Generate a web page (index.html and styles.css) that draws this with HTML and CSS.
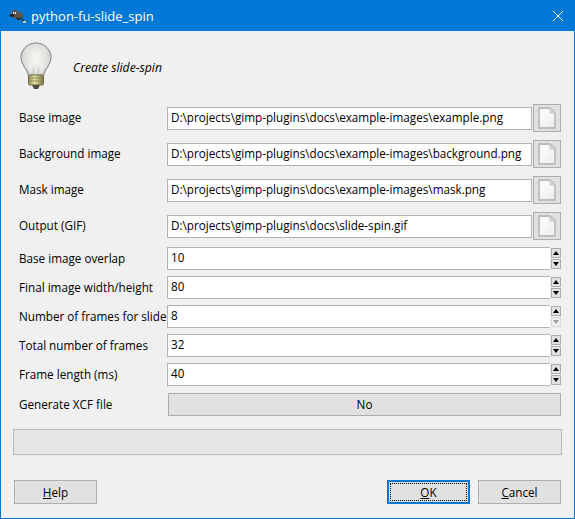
FILE: index.html
```html
<!DOCTYPE html>
<html lang="en">

<head>
    <meta charset="UTF-8">
    <title>python-fu-slide_spin</title>
    <link rel="stylesheet" href="styles.css">
</head>

<body>
    <svg class="defs" width="0" height="0">
        <defs>
            <linearGradient id="hoja" x1="0" y1="0" x2="1" y2="1">
                <stop offset="0" stop-color="#ffffff" />
                <stop offset="1" stop-color="#ececec" />
            </linearGradient>
            <symbol id="doc" viewBox="0 0 18 22">
                <path d="M1 1h11l5 5v15h-16z" fill="url(#hoja)" stroke="#bdbdbd" stroke-width="1.800" stroke-linejoin="round" />
                <path d="M12 1v5h5z" fill="#d6d6d6" stroke="#c8c8c8" stroke-width="1" />
            </symbol>
        </defs>
    </svg>
    <div class="ventana">
        <div class="titulo">
            <svg class="wilber" width="17" height="14" viewBox="0 0 17 14">
                <path d="M0 6l2-1 1-4 2 1 1-2 2 2 4 1 2 3 1 3-3-1-3 2-4-1-3-2z" fill="#5c574e" />
                <path d="M0 6l4-1 2 2-4 1z" fill="#1e1c18" />
                <path d="M4 3h3v2h-3z" fill="#e8e6df" />
                <path d="M5 3.500h1v1h-1z" fill="#111111" />
                <path d="M7 8l4 1 2-1-1 2-4 1z" fill="#2d2a25" />
                <path d="M13 9l2 2 0 2-1 0-2-3z" fill="#3a352c" />
                <path d="M14 12h3v2h-3z" fill="#cfc9a8" />
            </svg>
            <span class="titulo-texto">python-fu-slide_spin</span>
            <svg class="cerrar" width="10" height="10" viewBox="0 0 10 10">
                <path d="M0 0l10 10M10 0l-10 10" stroke="#ffffff" stroke-width="1" fill="none" />
            </svg>
        </div>

        <div class="contenido">
            <div class="cabecera">
                <svg class="foco" width="32" height="50" viewBox="0 0 32 50">
                    <defs>
                        <radialGradient id="vidrio" cx="0.5" cy="0.42" r="0.6">
                            <stop offset="0" stop-color="#f6f7f4" />
                            <stop offset="0.6" stop-color="#e2e4e0" />
                            <stop offset="1" stop-color="#b9bcba" />
                        </radialGradient>
                        <linearGradient id="rosca" x1="0" y1="0" x2="1" y2="0">
                            <stop offset="0" stop-color="#8c8a50" />
                            <stop offset="0.4" stop-color="#e6e3a8" />
                            <stop offset="1" stop-color="#77744a" />
                        </linearGradient>
                    </defs>
                    <path d="M16 1C7.500 1 1 7.500 1 15.500c0 7 5.500 10.500 7 17 .5 2 1 3.500 1.500 4.500h13c.5-1 1-2.500 1.500-4.500 1.500-6.500 7-10 7-17C31 7.500 24.500 1 16 1z" fill="url(#vidrio)" stroke="#7f8287" stroke-width="1" />
                    <path d="M11 31l-1.500-7 3-3h7l3 3-1.500 7" fill="none" stroke="#f8f8f4" stroke-width="1" />
                    <path d="M14 33l-1-7M18 33l1-7" stroke="#c9c9b8" stroke-width="1" fill="none" />
                    <rect x="8.500" y="33" width="15" height="10" rx="1.500" fill="url(#rosca)" stroke="#6d6b45" stroke-width="1" />
                    <path d="M9 36h14M9 39h14" stroke="#8e8b58" stroke-width="1" />
                    <path d="M12 43h8l-2 4h-4z" fill="#4a4a3c" />
                </svg>
                <em class="descripcion">Create slide-spin</em>
            </div>

            <div class="campos">
                <div class="fila fila-archivo">
                    <label>Base image</label>
                    <div class="entrada">D:\projects\gimp-plugins\docs\example-images\example.png</div>
                    <button class="btn-archivo"><svg width="18" height="22"><use href="#doc" /></svg></button>
                </div>
                <div class="fila fila-archivo">
                    <label>Background image</label>
                    <div class="entrada">D:\projects\gimp-plugins\docs\example-images\background.png</div>
                    <button class="btn-archivo"><svg width="18" height="22"><use href="#doc" /></svg></button>
                </div>
                <div class="fila fila-archivo">
                    <label>Mask image</label>
                    <div class="entrada">D:\projects\gimp-plugins\docs\example-images\mask.png</div>
                    <button class="btn-archivo"><svg width="18" height="22"><use href="#doc" /></svg></button>
                </div>
                <div class="fila fila-archivo">
                    <label>Output (GIF)</label>
                    <div class="entrada">D:\projects\gimp-plugins\docs\slide-spin.gif</div>
                    <button class="btn-archivo"><svg width="18" height="22"><use href="#doc" /></svg></button>
                </div>

                <div class="fila">
                    <label>Base image overlap</label>
                    <div class="entrada entrada-spin">10</div>
                    <div class="spin"><span class="up"></span><span class="down"></span></div>
                </div>
                <div class="fila">
                    <label>Final image width/height</label>
                    <div class="entrada entrada-spin">80</div>
                    <div class="spin"><span class="up"></span><span class="down"></span></div>
                </div>
                <div class="fila">
                    <label>Number of frames for slide</label>
                    <div class="entrada entrada-spin">8</div>
                    <div class="spin"><span class="up"></span><span class="down apagado"></span></div>
                </div>
                <div class="fila">
                    <label>Total number of frames</label>
                    <div class="entrada entrada-spin">32</div>
                    <div class="spin"><span class="up"></span><span class="down"></span></div>
                </div>
                <div class="fila">
                    <label>Frame length (ms)</label>
                    <div class="entrada entrada-spin">40</div>
                    <div class="spin"><span class="up"></span><span class="down"></span></div>
                </div>

                <div class="fila fila-toggle">
                    <label>Generate XCF file</label>
                    <button class="boton toggle">No</button>
                </div>
            </div>

            <div class="progreso"></div>

            <div class="acciones">
                <button class="boton accion"><u>H</u>elp</button>
                <div class="acciones-der">
                    <button class="boton accion foco-ok"><span class="punteado"><u>O</u>K</span></button>
                    <button class="boton accion"><u>C</u>ancel</button>
                </div>
            </div>
        </div>
    </div>
</body>

</html>
```

FILE: styles.css
```css
* {
    box-sizing: border-box;
}

html,
body {
    margin: 0;
    height: 519px;
    overflow: hidden;
}

body {
    font-family: "Open Sans", "Noto Sans", sans-serif;
    font-size: 11.700px;
    color: #000000;
    background-color: #f0f0f0;
}

.defs {
    display: block;
    height: 0;
}

.ventana {
    width: 575px;
    height: 519px;
    display: flex;
    flex-direction: column;
    border: 1px solid #0078d7;
    border-top: none;
    background-color: #f0f0f0;
}

.titulo {
    height: 31px;
    flex: none;
    display: flex;
    align-items: center;
    background-color: #0078d7;
    color: #ffffff;
    padding: 0 11px 0 8px;
}

.wilber {
    margin-right: 5px;
}

.titulo-texto {
    flex: 1;
    font-size: 13px;
}

.contenido {
    flex: 1;
    display: flex;
    flex-direction: column;
    padding: 0 12px 0 12px;
}

.cabecera {
    height: 72px;
    display: flex;
    align-items: center;
    padding: 0 0 0 7px;
}

.descripcion {
    margin-left: 21px;
    font-size: 12.200px;
}

.campos {
    display: flex;
    flex-direction: column;
    gap: 6px;
    padding: 0 1px 0 6px;
}

.fila {
    height: 23px;
    display: flex;
    align-items: center;
}

.fila-archivo {
    height: 30px;
}

.fila-toggle {
    margin-top: 1px;
}

.fila label {
    width: 148px;
    flex: none;
    padding-bottom: 2px;
    white-space: nowrap;
}

.entrada {
    height: 23px;
    width: 365px;
    line-height: 19px;
    padding: 0 3px;
    background-color: #ffffff;
    border: 1px solid #b4b4b4;
    white-space: nowrap;
    overflow: hidden;
}

.entrada-spin {
    width: 383px;
    border-right: none;
}

.btn-archivo {
    width: 28px;
    height: 28px;
    margin-left: 1px;
    padding: 0;
    display: flex;
    align-items: center;
    justify-content: center;
    background-color: #e1e1e1;
    border: 1px solid #adadad;
}

.spin {
    width: 10px;
    height: 21px;
    margin-left: 1px;
    display: flex;
    flex-direction: column;
    gap: 1px;
}

.spin span {
    flex: 1;
    background-color: #e1e1e1;
    border: 1px solid #adadad;
    display: flex;
    align-items: center;
    justify-content: center;
}

.spin span::after {
    content: "";
    border-left: 3px solid transparent;
    border-right: 3px solid transparent;
}

.spin .up::after {
    border-bottom: 4px solid #000000;
}

.spin .down::after {
    border-top: 4px solid #000000;
}

.spin .apagado {
    background-color: #efefef;
    border-color: #d9d9d9;
}

.spin .apagado::after {
    border-top-color: #a0a0a0;
}

.boton {
    font-family: inherit;
    font-size: 11.700px;
    color: #000000;
    background-color: #e1e1e1;
    border: 1px solid #adadad;
    padding: 0;
}

.toggle {
    width: 393px;
    height: 23px;
    margin-left: 1px;
    padding-bottom: 2px;
}

.progreso {
    height: 26px;
    margin: 13px 0 0 0;
    background-color: #e6e6e6;
    border: 1px solid #bcbcbc;
}

.acciones {
    display: flex;
    justify-content: space-between;
    margin-top: 25px;
    padding: 0 1px 0 1px;
}

.acciones-der {
    display: flex;
    gap: 8px;
}

.accion {
    width: 83px;
    height: 24px;
}

.foco-ok {
    border: 2px solid #0078d7;
    padding: 1px;
}

.punteado {
    display: block;
    height: 100%;
    line-height: 16px;
    border: 1px dotted #000000;
}
```
